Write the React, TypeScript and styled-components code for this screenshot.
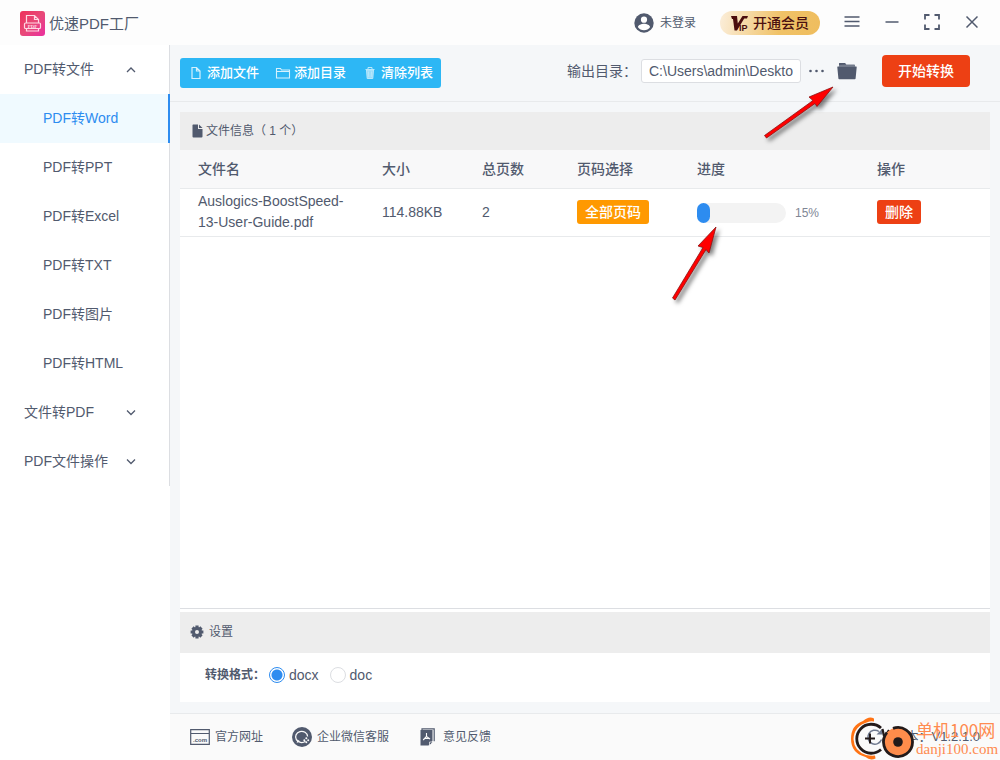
import React, { useState } from "react";
import styled, { createGlobalStyle, css } from "styled-components";

const ink = "#515a6e";
const blue = "#2d8cf0";
const red = "#ed4014";

const GlobalStyle = createGlobalStyle`
  *, *::before, *::after { box-sizing: border-box; }
  body {
    margin: 0;
    background: #fff;
    color: ${ink};
    font: 14px/20px "Liberation Sans", "Noto Sans CJK SC", sans-serif;
  }
  button, input { font: inherit; color: inherit; }
  button { border: 0; padding: 0; background: none; cursor: pointer; white-space: nowrap; }
  svg { display: block; flex: none; }
`;

const Window = styled.div`
  min-height: 100vh;
  display: flex;
  flex-direction: column;
`;

const TitleBar = styled.header`
  height: 45px;
  display: flex;
  align-items: center;
  justify-content: space-between;
  padding: 0 22px 0 20px;
  background: #fdfdfd;
`;

const Brand = styled.h1`
  margin: 0;
  display: flex;
  align-items: center;
  gap: 4px;
  padding-top: 2px;
  font-size: 15px;
  line-height: 24px;
  font-weight: 400;
`;

const TitleActions = styled.div`
  display: flex;
  align-items: center;
  gap: 24px;
`;

const UserButton = styled.button`
  display: flex;
  align-items: center;
  gap: 6px;
  font-size: 12px;
`;

const VipButton = styled.button`
  display: flex;
  align-items: center;
  gap: 4px;
  width: 100px;
  height: 24px;
  padding-left: 10px;
  border-radius: 12px;
  background: linear-gradient(100deg, #fbeedb, #f0c267 60%, #efbd5e);
  color: #4b1010;
  font-weight: 500;
`;

const WindowControls = styled.div`
  display: flex;
  align-items: center;
  gap: 24px;
  padding-bottom: 2px;
`;

const IconButton = styled.button`
  position: relative;
  display: flex;
`;

const Body = styled.div`
  flex: 1;
  display: flex;
`;

const Sidebar = styled.nav`
  flex: 0 0 170px;
  background: #fff;
`;

const Menu = styled.ul`
  margin: 0;
  padding: 0;
  list-style: none;
`;

const MenuGroup = styled.button`
  display: flex;
  align-items: center;
  justify-content: space-between;
  width: 100%;
  height: 49px;
  padding: 0 33px 1px 24px;
  border-right: 1px solid #dcdee2;
`;

const MenuLink = styled.a<{ $active: boolean }>`
  display: block;
  height: 49px;
  padding-left: 43px;
  line-height: 49px;
  color: ${ink};
  text-decoration: none;
  border-right: 1px solid #dcdee2;
  ${(p) => p.$active && css`
    color: ${blue};
    background: #f0faff;
    border-right: 2px solid ${blue};
  `}
`;

const Main = styled.main`
  flex: 1;
  min-width: 0;
  display: flex;
  flex-direction: column;
  background: #f5f7f9;
`;

const Toolbar = styled.div`
  display: flex;
  align-items: center;
  justify-content: space-between;
  height: 57px;
  padding: 0 30px 4px 10px;
  border-bottom: 1px solid #e8eaec;
`;

const ButtonGroup = styled.div`
  display: flex;
  height: 30px;
  margin-top: 4px;
  border-radius: 3px;
  background: #2db7f5;
`;

const GroupButton = styled.button`
  display: flex;
  align-items: center;
  gap: 3px;
  padding: 0 8px;
  color: #fff;
  font-size: 13px;
  font-weight: 500;
`;

const Output = styled.div`
  display: flex;
  align-items: center;
`;

const OutputLabel = styled.label`
  width: 74px;
`;

const PathInput = styled.input`
  width: 160px;
  height: 24px;
  margin-right: 8px;
  padding: 0 7px;
  border: 1px solid #dcdee2;
  border-radius: 3px;
  background: #fff;
`;

const FolderSlot = styled.div`
  margin-left: 12px;
`;

const StartButton = styled.button`
  height: 32px;
  margin-left: 25px;
  padding: 0 16px;
  border-radius: 4px;
  background: ${red};
  color: #fff;
  font-weight: 500;
`;

const Content = styled.div`
  flex: 1;
  display: flex;
  flex-direction: column;
  padding: 10px 10px 11px;
`;

const FilePanel = styled.section`
  flex: 1;
  background: #fff;
  border-bottom: 1px solid #dcdee2;
`;

const SettingsPanel = styled.section`
  background: #fff;
  border-top: 3px solid #fff;
`;

const PanelTitle = styled.h2<{ $large?: boolean }>`
  display: flex;
  align-items: center;
  gap: ${(p) => (p.$large ? 5 : 2)}px;
  height: ${(p) => (p.$large ? 41 : 38)}px;
  margin: 0;
  padding: 0 10px ${(p) => (p.$large ? 2 : 0)}px;
  background: #ededed;
  font-size: 12px;
  font-weight: 400;
`;

const FileTable = styled.table`
  width: 100%;
  table-layout: fixed;
  border-collapse: collapse;
  line-height: 21px;

  th, td {
    padding: 0 18px;
    text-align: left;
    border-bottom: 1px solid #e8eaec;
  }
  th {
    height: 38px;
    padding-top: 2px;
    background: #f8f8f9;
    font-weight: 500;
  }
  td { height: 48px; }
`;

const Column = styled.col<{ $width?: number }>`
  ${(p) => p.$width && `width: ${p.$width}px;`}
`;

const TagButton = styled.button<{ $color: string }>`
  display: block;
  height: 24px;
  padding: 0 8px;
  border-radius: 3px;
  background: ${(p) => p.$color};
  color: #fff;
  font-weight: 500;
`;

const Progress = styled.div`
  position: relative;
  display: flex;
  align-items: center;
  gap: 9px;
  padding-top: 2px;
  color: #808695;
  font-size: 12px;
`;

const Track = styled.div`
  width: 89px;
  height: 20px;
  border-radius: 10px;
  background: #f3f3f3;
`;

const Fill = styled.div`
  height: 100%;
  border-radius: 10px;
  background: ${blue};
`;

const FormatRow = styled.fieldset`
  display: flex;
  align-items: center;
  gap: 11px;
  height: 49px;
  margin: 0;
  padding: 0 25px 6px;
  border: 0;
`;

const FormatLabel = styled.span`
  width: 53px;
  white-space: nowrap;
  font-size: 12px;
  font-weight: 700;
`;

const RadioLabel = styled.label`
  display: flex;
  align-items: center;
  gap: 4px;
`;

const Radio = styled.input`
  appearance: none;
  width: 16px;
  height: 16px;
  margin: 0;
  border: 1px solid #dcdee2;
  border-radius: 50%;
  background: #fff;
  &:checked {
    border-color: ${blue};
    background: radial-gradient(circle, ${blue} 5px, #fff 6px);
  }
`;

const Footer = styled.footer`
  position: relative;
  display: flex;
  align-items: center;
  gap: 29px;
  height: 47px;
  padding: 0 20px;
  border-top: 1px solid #e8eaec;
  background: #fafafa;
`;

const FooterLink = styled.a`
  display: flex;
  align-items: center;
  gap: 5px;
  color: ${ink};
  font-size: 12px;
  text-decoration: none;
`;

const Version = styled.div`
  display: flex;
  align-items: center;
  gap: 9px;
  margin-left: auto;
  font-size: 13px;
`;

const Watermark = styled.div`
  position: absolute;
  right: 2px;
  bottom: 0;
  display: flex;
  align-items: center;
  color: #ff8b50;
  pointer-events: none;
`;

const WatermarkText = styled.div`
  display: flex;
  flex-direction: column;
  width: 82px;
  font-family: "Noto Sans CJK SC", sans-serif;
  font-size: 17px;
  line-height: 20px;
`;

const WatermarkDomain = styled.span`
  font-family: "Liberation Serif", serif;
  font-size: 15px;
  line-height: 18px;
`;

const Pointer = styled.svg<{ $left: number; $top: number }>`
  position: absolute;
  z-index: 2;
  left: ${(p) => p.$left}px;
  top: ${(p) => p.$top}px;
  pointer-events: none;
  filter: drop-shadow(3px 3px 2px rgba(0, 0, 0, 0.5));
`;

const LogoIcon = () => (
  <svg width="25" height="25" viewBox="0 0 25 25">
    <defs>
      <linearGradient id="logo" x1="0" y1="0" x2="1" y2="1">
        <stop offset="0" stopColor="#ee2f59" />
        <stop offset="0.5" stopColor="#e84a78" />
        <stop offset="1" stopColor="#ea2fa0" />
      </linearGradient>
    </defs>
    <rect width="25" height="25" rx="3" fill="url(#logo)" />
    <g fill="none" stroke="#ffd9e3" strokeWidth="1.2">
      <path d="M6.500 12V4.500h8l4 4V12M14.500 4.500v4h4" />
      <rect x="4.500" y="12" width="16" height="5.500" rx="1" />
      <path d="M6.500 17.500v2.500h12v-2.500" />
    </g>
    <text x="12.500" y="16.800" textAnchor="middle" fontSize="5" fontWeight="700" fontFamily="Liberation Serif, serif" fill="#ffd9e3">PDF</text>
  </svg>
);

const UserIcon = () => (
  <svg width="20" height="20" viewBox="0 0 20 20">
    <circle cx="10" cy="10" r="9.7" fill={ink} />
    <circle cx="10" cy="6.7" r="3.1" fill="#fff" />
    <path d="M4 14.2c0-2.2 3.6-3.4 6-3.4s6 1.200 6 3.400c-1.300 1.900-3.500 3-6 3s-4.700-1.100-6-3z" fill="#fff" />
  </svg>
);

const VipIcon = () => (
  <svg width="19" height="18" viewBox="0 0 19 18">
    <path d="M1 2h6l.8 7.600L12.500 2H18l-1 2.500h-2.800L7 16.500H4.500L3 5H2z" fill="#4b0d0d" />
    <text x="9" y="17" fontSize="9" fontWeight="700" fontFamily="Liberation Sans, sans-serif" fill="#4b0d0d">IP</text>
  </svg>
);

const MenuIcon = () => (
  <svg width="16" height="14" viewBox="0 0 16 14" stroke={ink} strokeWidth="1.500">
    <path d="M.5 2h15M.5 6.500h15M.5 11h15" />
  </svg>
);

const MinimizeIcon = () => (
  <svg width="16" height="16" viewBox="0 0 16 16" stroke={ink} strokeWidth="1.500">
    <path d="M1.500 8h13" />
  </svg>
);

const MaximizeIcon = () => (
  <svg width="16" height="16" viewBox="0 0 16 16" fill="none" stroke={ink} strokeWidth="1.800">
    <path d="M1 5.500V1h4.500M10.500 1H15v4.500M15 10.500V15h-4.500M5.500 15H1v-4.500" />
  </svg>
);

const CloseIcon = () => (
  <svg width="14" height="14" viewBox="0 0 14 14" fill="none" stroke={ink} strokeWidth="1.500">
    <path d="M2.500 1.500l11 11M13.500 1.500l-11 11" />
  </svg>
);

const Chevron = ({ open = false }: { open?: boolean }) => (
  <svg width="10" height="12" viewBox="0 0 10 12" fill="none" stroke={ink} strokeWidth="1.300">
    <path d={open ? "M1 9l4-4 4 4" : "M1 4.500l4 4 4-4"} />
  </svg>
);

const FileIcon = () => (
  <svg width="16" height="14" viewBox="0 0 16 14" fill="none" stroke="#d5f1fd" strokeWidth="1.200">
    <path d="M4 1.500h4.500L12 5v7.500H4zM8.500 1.500V5H12" />
  </svg>
);

const FolderOutlineIcon = () => (
  <svg width="16" height="14" viewBox="0 0 16 14" fill="none" stroke="#d5f1fd" strokeWidth="1.100">
    <path d="M1.500 12V2.500h4l1 1.500h8v8zM1.500 5.500h13" />
  </svg>
);

const TrashIcon = () => (
  <svg width="16" height="14" viewBox="0 0 16 14" fill="none" stroke="#b9e8fc" strokeWidth="1">
    <path d="M4.500 4h7l-.7 8.500H5.200z" fill="#9adcfa" />
    <path d="M3.500 3.500h9M6 3V1.500h4V3M6.500 5.500l.3 5.500M9.500 5.500l-.3 5.500" />
  </svg>
);

const DocIcon = () => (
  <svg width="14" height="14" viewBox="0 0 14 14" fill={ink}>
    <path d="M3 .5h5V5h4.500v7.500a1 1 0 0 1-1 1H3.500a1 1 0 0 1-1-1V1z" />
    <path d="M9 .5L12.500 4H9z" />
  </svg>
);

const DotsIcon = () => (
  <svg width="16" height="16" viewBox="0 0 16 16" fill={ink}>
    <circle cx="1.500" cy="8" r="1.300" />
    <circle cx="7.500" cy="8" r="1.300" />
    <circle cx="13.500" cy="8" r="1.300" />
  </svg>
);

const FolderIcon = () => (
  <svg width="20" height="18" viewBox="0 0 20 18" fill={ink}>
    <path d="M2 4.700V1.800Q2 1 2.800 1h5l1.500 1.500h7.900q.8 0 .8.800v1.400z" fill="#747c8d" />
    <path d="M2 3V1.800Q2 1 2.800 1h5l1.500 1.500z" />
    <path d="M.8 4.600h18.400q.6 0 .5.600L18.600 16.500q-.1.700-.8.700H2.200q-.7 0-.8-.7L.3 5.200Q.2 4.600.8 4.600z" />
  </svg>
);

const GearIcon = () => (
  <svg width="14" height="14" viewBox="0 0 14 14">
    <g stroke={ink} strokeWidth="3.200">
      <path d="M7 .6v12.800M.6 7h12.800M2.500 2.500l9 9M11.500 2.500l-9 9" />
    </g>
    <circle cx="7" cy="7" r="5" fill={ink} />
    <circle cx="7" cy="7" r="2" fill="#ededed" />
  </svg>
);

const SiteIcon = () => (
  <svg width="20" height="16" viewBox="0 0 20 16" fill="none" stroke={ink}>
    <path d="M.7.7h18.600v14.600H.7zM.7 4.500h18.600" strokeWidth="1.200" />
    <text x="10" y="12.500" textAnchor="middle" fontSize="6" fontWeight="700" fontFamily="Liberation Sans, sans-serif" fill={ink} stroke="none">.com</text>
  </svg>
);

const ServiceIcon = () => (
  <svg width="20" height="20" viewBox="0 0 20 20" fill="none">
    <circle cx="10" cy="10" r="10" fill={ink} />
    <path d="M13.500 14.200A6 5.600 0 1 1 15.600 9.500" stroke="#fafafa" strokeWidth="1.300" />
    <path d="M5.500 12.500l-.8 3.500 3.300-1.700" fill="#fafafa" />
    <g fill="#fafafa">
      <circle cx="14.300" cy="11.300" r="1" />
      <circle cx="16.200" cy="13.300" r="1" />
      <circle cx="14.300" cy="15.300" r="1" />
      <circle cx="12.300" cy="13.300" r="1" />
    </g>
  </svg>
);

const FeedbackIcon = () => (
  <svg width="20" height="18" viewBox="0 0 20 18" fill="none">
    <path d="M4 2V.8h12.200v12.500" stroke={ink} strokeWidth="1.200" />
    <path d="M2.500 2h12v11l-4 4.500h-8z" fill={ink} />
    <path d="M11.500 17.500v-3.500H15z" fill={ink} stroke="#fafafa" strokeWidth=".7" />
    <path d="M8.500 5v3.500L5.200 12M8.500 8.500l3.500 2.500M6.500 10.500h4" stroke="#fafafa" strokeWidth="1.100" />
  </svg>
);

const RefreshIcon = () => (
  <svg width="18" height="18" viewBox="0 0 18 18" fill="none" stroke="#707a90" strokeWidth="1.500">
    <path d="M15.500 11.500A7 7 0 1 1 13 3.500" />
    <path d="M16.500.5v6h-6z" fill="#707a90" stroke="none" />
  </svg>
);

const WatermarkLogo = () => (
  <svg width="66" height="43" viewBox="0 0 66 43" fill="none">
    <path d="M24 4.500Q20 4 18 5 4 9 3.500 22 4 34 16 38q5 1 9 .500l.500 3Q20 44 15.500 40 1 36 1 22 1 8 13 4 19-1.500 24 1.500z" fill="#ff7314" />
    <path d="M31 11A14.500 14.500 0 1 0 31 32.500" stroke="#231a1a" strokeWidth="2.800" />
    <path d="M15 21.500h10M20 16.500v10" stroke="#231a1a" strokeWidth="2" />
    <path d="M32.500 12l1.500 7M39 13l-4 6" stroke="#231a1a" strokeWidth="2.200" />
    <circle cx="48" cy="25" r="14.500" fill="#ff8c4b" />
    <path d="M43 11.400A14.500 14.500 0 1 1 36.900 15.700" stroke="#231a1a" strokeWidth="2.800" />
    <circle cx="48" cy="25" r="4.800" fill="#231a1a" />
  </svg>
);

const OutputPointer = () => (
  <Pointer $left={-77} $top={19} width="80" height="62" viewBox="0 0 80 62" aria-hidden="true">
    <path d="M73 6L49 16l4 3.500L4.500 54.500l2 2.500L55 22.500l2 3z" fill="#f00" stroke="#8d1010" strokeWidth="0.800" />
  </Pointer>
);

const ProgressPointer = () => (
  <Pointer $left={-30} $top={19} width="60" height="86" viewBox="0 0 60 86" aria-hidden="true">
    <path d="M49 7L31 26l5 1.500L5.500 78l2.500 2L39 29.500l3 3.500z" fill="#f00" stroke="#8d1010" strokeWidth="0.800" />
  </Pointer>
);

const formats = ["Word", "PPT", "Excel", "TXT", "图片", "HTML"];
const outputs = ["docx", "doc"];
const files = [{ name: "Auslogics-BoostSpeed-13-User-Guide.pdf", size: "114.88KB", pages: 2, progress: 15 }];

export default function App() {
  const [active, setActive] = useState("Word");
  const [output, setOutput] = useState("docx");

  return (
    <Window>
      <GlobalStyle />
      <TitleBar>
        <Brand><LogoIcon />优速PDF工厂</Brand>
        <TitleActions>
          <UserButton><UserIcon />未登录</UserButton>
          <VipButton><VipIcon />开通会员</VipButton>
          <WindowControls>
            <IconButton aria-label="菜单"><MenuIcon /></IconButton>
            <IconButton aria-label="最小化"><MinimizeIcon /></IconButton>
            <IconButton aria-label="最大化"><MaximizeIcon /></IconButton>
            <IconButton aria-label="关闭"><CloseIcon /></IconButton>
          </WindowControls>
        </TitleActions>
      </TitleBar>
      <Body>
        <Sidebar>
          <Menu>
            <li>
              <MenuGroup aria-expanded="true">PDF转文件<Chevron open /></MenuGroup>
              <Menu>
                {formats.map((f) => (
                  <li key={f}>
                    <MenuLink href={`#${f}`} $active={f === active} onClick={() => setActive(f)}>PDF转{f}</MenuLink>
                  </li>
                ))}
              </Menu>
            </li>
            <li><MenuGroup aria-expanded="false">文件转PDF<Chevron /></MenuGroup></li>
            <li><MenuGroup aria-expanded="false">PDF文件操作<Chevron /></MenuGroup></li>
          </Menu>
        </Sidebar>
        <Main>
          <Toolbar>
            <ButtonGroup>
              <GroupButton><FileIcon />添加文件</GroupButton>
              <GroupButton><FolderOutlineIcon />添加目录</GroupButton>
              <GroupButton><TrashIcon />清除列表</GroupButton>
            </ButtonGroup>
            <Output>
              <OutputLabel htmlFor="path">输出目录：</OutputLabel>
              <PathInput id="path" defaultValue="C:\Users\admin\Desktop" />
              <IconButton aria-label="更多"><DotsIcon /></IconButton>
              <FolderSlot>
                <IconButton aria-label="打开目录"><FolderIcon /><OutputPointer /></IconButton>
              </FolderSlot>
              <StartButton>开始转换</StartButton>
            </Output>
          </Toolbar>
          <Content>
            <FilePanel>
              <PanelTitle><DocIcon />文件信息（ 1 个）</PanelTitle>
              <FileTable>
                <colgroup>
                  <Column />
                  <Column $width={100} />
                  <Column $width={95} />
                  <Column $width={120} />
                  <Column $width={180} />
                  <Column $width={131} />
                </colgroup>
                <thead>
                  <tr>
                    <th>文件名</th><th>大小</th><th>总页数</th><th>页码选择</th><th>进度</th><th>操作</th>
                  </tr>
                </thead>
                <tbody>
                  {files.map((f) => (
                    <tr key={f.name}>
                      <td>{f.name}</td>
                      <td>{f.size}</td>
                      <td>{f.pages}</td>
                      <td><TagButton $color="#ff9900">全部页码</TagButton></td>
                      <td>
                        <Progress>
                          <Track role="progressbar" aria-label="进度" aria-valuenow={f.progress}>
                            <Fill style={{ width: `${f.progress}%` }} />
                          </Track>
                          {f.progress}%
                          <ProgressPointer />
                        </Progress>
                      </td>
                      <td><TagButton $color={red}>删除</TagButton></td>
                    </tr>
                  ))}
                </tbody>
              </FileTable>
            </FilePanel>
            <SettingsPanel>
              <PanelTitle $large><GearIcon />设置</PanelTitle>
              <FormatRow aria-label="转换格式">
                <FormatLabel>转换格式：</FormatLabel>
                {outputs.map((o) => (
                  <RadioLabel key={o}>
                    <Radio type="radio" name="format" checked={o === output} onChange={() => setOutput(o)} />
                    {o}
                  </RadioLabel>
                ))}
              </FormatRow>
            </SettingsPanel>
          </Content>
          <Footer>
            <FooterLink href="#site"><SiteIcon />官方网址</FooterLink>
            <FooterLink href="#service"><ServiceIcon />企业微信客服</FooterLink>
            <FooterLink href="#feedback"><FeedbackIcon />意见反馈</FooterLink>
            <Version><RefreshIcon />版本：V1.2.1.0</Version>
            <Watermark>
              <WatermarkLogo />
              <WatermarkText>单机100网<WatermarkDomain>danji100.com</WatermarkDomain></WatermarkText>
            </Watermark>
          </Footer>
        </Main>
      </Body>
    </Window>
  );
}
